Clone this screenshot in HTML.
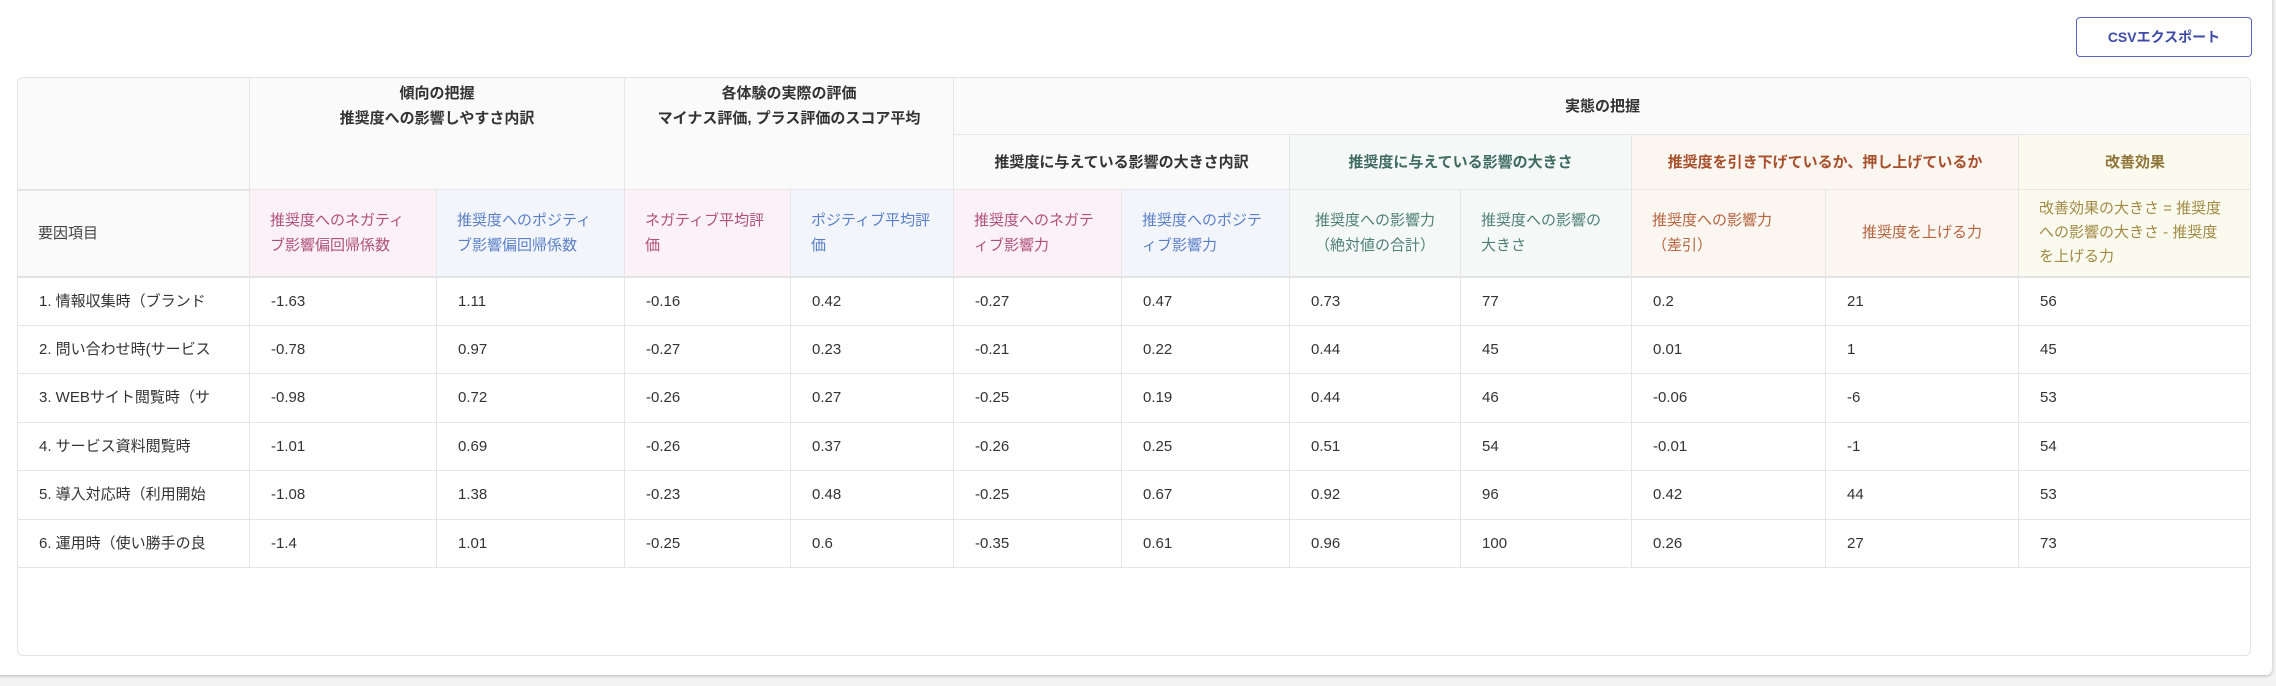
<!DOCTYPE html>
<html><head><meta charset="utf-8"><style>
*{box-sizing:border-box;margin:0;padding:0}
body{width:2276px;height:686px;background:#f4f4f5;font-family:"Liberation Sans","Noto Sans CJK JP",sans-serif;overflow:hidden;position:relative}
.card{position:absolute;left:-10px;top:-10px;width:2282px;height:685px;background:#fff;border-radius:6px;box-shadow:0 1px 3px rgba(0,0,0,.25)}
.btn{position:absolute;left:2076px;top:17px;width:176px;height:40px;border:1px solid #5a66c4;border-radius:4px;color:#3d4aa8;font-weight:bold;font-size:14px;display:flex;align-items:center;justify-content:center;background:#fff}
.wrap{position:absolute;left:17px;top:77px;width:2234px;height:579px;border:1px solid #e3e3e3;border-radius:6px;overflow:hidden;background:#fff}
table{border-collapse:collapse;table-layout:fixed;width:2234px;margin:-1px 0 0 -1px}
td,th{border:1px solid #e6e6e6;font-size:15px;line-height:25px;vertical-align:middle}
th{font-weight:bold;color:#333;background:#fafafa;text-align:center}
.h td{padding:0 20px;text-align:left}
.h td.c{text-align:center}
.hb td,.hb th{border-bottom:2px solid #e3e3e3}
tbody td{color:#333;padding:0 21px;height:48.5px;white-space:nowrap;overflow:hidden}
.pk{background:#fbf1f6;color:#b0527a}.bl{background:#f2f6fc;color:#5b7fc7}
.gr{background:#f4f9f8;color:#4f7f75}.or{background:#fcf6f1;color:#b5643f}.ye{background:#fbfaee;color:#a08a45}
th.gr{color:#3f6a61}th.or{color:#a8502c}th.ye{color:#8f7638}
</style></head><body>
<div class="card"></div>
<div class="btn">CSVエクスポート</div>
<div class="wrap"><table>
<colgroup><col style="width:232px"><col style="width:187px"><col style="width:188px"><col style="width:166px"><col style="width:163px"><col style="width:168px"><col style="width:168px"><col style="width:171px"><col style="width:171px"><col style="width:194px"><col style="width:193px"><col style="width:233px"></colgroup>
<thead>
<tr style="height:57px"><th rowspan="2" style="border-bottom:2px solid #e3e3e3"></th><th colspan="2" rowspan="2" style="vertical-align:top;padding-top:3px">傾向の把握<br>推奨度への影響しやすさ内訳</th><th colspan="2" rowspan="2" style="vertical-align:top;padding-top:3px">各体験の実際の評価<br>マイナス評価, プラス評価のスコア平均</th><th colspan="8">実態の把握</th></tr>
<tr style="height:55px"><th colspan="2">推奨度に与えている影響の大きさ内訳</th><th colspan="2" class="gr">推奨度に与えている影響の大きさ</th><th colspan="2" class="or">推奨度を引き下げているか、押し上げているか</th><th class="ye">改善効果</th></tr>
<tr class="h hb" style="height:87px"><td style="background:#fafafa;color:#444">要因項目</td><td class="pk">推奨度へのネガティブ影響偏回帰係数</td><td class="bl">推奨度へのポジティブ影響偏回帰係数</td><td class="pk">ネガティブ平均評価</td><td class="bl">ポジティブ平均評価</td><td class="pk">推奨度へのネガティブ影響力</td><td class="bl">推奨度へのポジティブ影響力</td><td class="gr c">推奨度への影響力<br>（絶対値の合計）</td><td class="gr">推奨度への影響の大きさ</td><td class="or">推奨度への影響力<br>（差引）</td><td class="or c">推奨度を上げる力</td><td class="ye" style="line-height:24px">改善効果の大きさ = 推奨度への影響の大きさ - 推奨度を上げる力</td></tr>
</thead>
<tbody>
<tr><td>1. 情報収集時（ブランド</td><td>-1.63</td><td>1.11</td><td>-0.16</td><td>0.42</td><td>-0.27</td><td>0.47</td><td>0.73</td><td>77</td><td>0.2</td><td>21</td><td>56</td></tr>
<tr><td>2. 問い合わせ時(サービス</td><td>-0.78</td><td>0.97</td><td>-0.27</td><td>0.23</td><td>-0.21</td><td>0.22</td><td>0.44</td><td>45</td><td>0.01</td><td>1</td><td>45</td></tr>
<tr><td>3. WEBサイト閲覧時（サ</td><td>-0.98</td><td>0.72</td><td>-0.26</td><td>0.27</td><td>-0.25</td><td>0.19</td><td>0.44</td><td>46</td><td>-0.06</td><td>-6</td><td>53</td></tr>
<tr><td>4. サービス資料閲覧時</td><td>-1.01</td><td>0.69</td><td>-0.26</td><td>0.37</td><td>-0.26</td><td>0.25</td><td>0.51</td><td>54</td><td>-0.01</td><td>-1</td><td>54</td></tr>
<tr><td>5. 導入対応時（利用開始</td><td>-1.08</td><td>1.38</td><td>-0.23</td><td>0.48</td><td>-0.25</td><td>0.67</td><td>0.92</td><td>96</td><td>0.42</td><td>44</td><td>53</td></tr>
<tr><td>6. 運用時（使い勝手の良</td><td>-1.4</td><td>1.01</td><td>-0.25</td><td>0.6</td><td>-0.35</td><td>0.61</td><td>0.96</td><td>100</td><td>0.26</td><td>27</td><td>73</td></tr>
</tbody></table></div>
</body></html>
